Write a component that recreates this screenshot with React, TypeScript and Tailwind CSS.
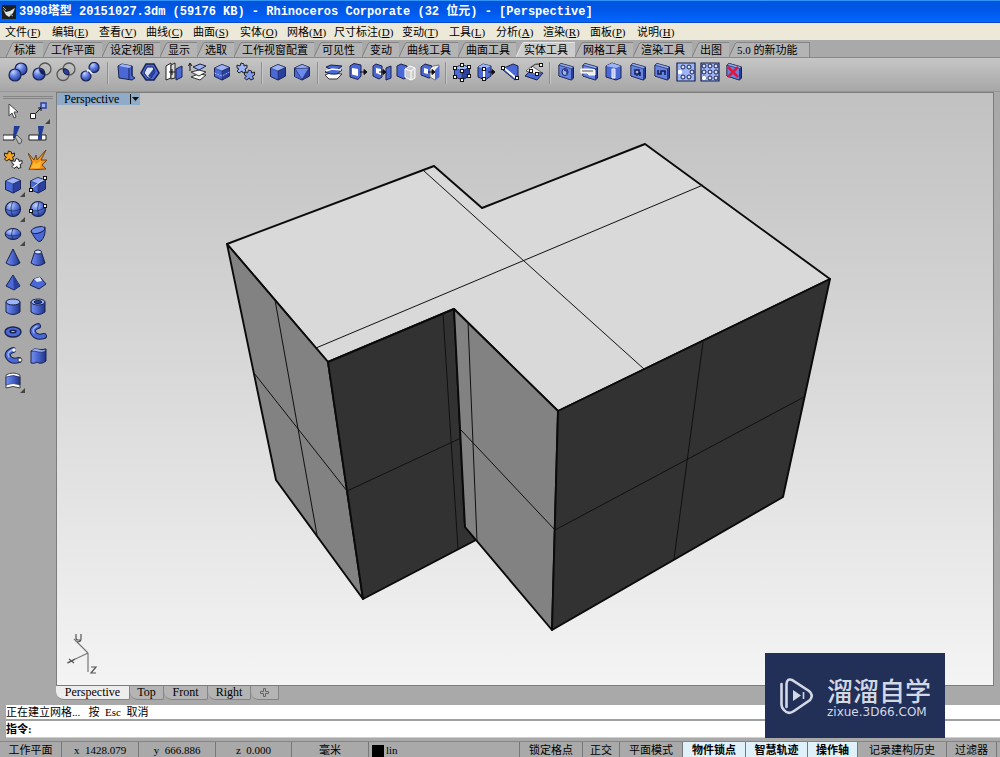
import React from "react";

const INK = "#18224f";
const MID = "#4b69d6";
const LIT = "#9db4f6";
const DEEP = "#2b409c";

type Pt = { x: number; y: number };

const Dot = ({ x, y }: Pt) => (
  <rect x={x - 1.5} y={y - 1.5} width="3" height="3" fill="#fff" stroke="#111" strokeWidth="1" />
);

const Ball = ({ x, y, r = 5 }: Pt & { r?: number }) => (
  <circle cx={x} cy={y} r={r} fill="url(#ball)" stroke={INK} strokeWidth="1.2" />
);

const Ring = ({ x, y }: Pt) => <circle cx={x} cy={y} r="6" fill="none" stroke="#555" strokeWidth="1.3" />;

const Cube = () => (
  <g stroke={INK} strokeWidth="1" strokeLinejoin="round">
    <path d="M2.5 6 10 2.5 17.5 5.5 17.5 14 10 18 2.5 14.5z" fill={MID} />
    <path d="M2.5 6 10 2.5 17.5 5.5 10 9z" fill={LIT} strokeWidth=".5" />
    <path d="M10 9 17.5 5.5V14L10 18z" fill={DEEP} strokeWidth=".5" />
  </g>
);

const Plate = () => (
  <g stroke={INK} strokeWidth="1" strokeLinejoin="round">
    <path d="M3 3 5 1.5 17.5 5V16L15.5 18 3 14z" fill={DEEP} />
    <path d="M3 3 15.5 6.5V18L3 14z" fill="#6683e4" strokeWidth=".6" />
    <path d="M3 3 5 1.5 17.5 5 15.5 6.5z" fill={LIT} strokeWidth=".4" />
  </g>
);

const Gear = ({ x, y, c }: Pt & { c: string }) => (
  <path
    transform={`translate(${x} ${y})`}
    d="M-5-3-2-2-1-5 2-4 2-2 5-3 5 0 3 1 4 4 1 5 0 3-3 5-5 3-3 1-5 0z"
    fill={c}
    stroke="#222"
    strokeWidth="1"
  />
);

const Arrow = ({ x, y }: Pt) => (
  <path d={`M${x - 6} ${y}H${x}M${x - 2} ${y - 2.5}L${x + 1} ${y}L${x - 2} ${y + 2.5}z`} stroke="#111" strokeWidth="1" fill="#111" />
);

const Banana = () => (
  <g strokeLinecap="round" fill="none">
    <path d="M10 4Q2 7 6 12 9 16 16 14" stroke={INK} strokeWidth="6" />
    <path d="M10 4Q2 7 6 12 9 16 16 14" stroke={MID} strokeWidth="4" />
    <path d="M9 4Q3 7 6 11" stroke={LIT} strokeWidth="1.5" />
  </g>
);

const drawings: Record<string, React.ReactNode> = {
  union: <><Ball x={13} y={7} r={6} /><Ball x={7} y={13} r={6} /></>,
  difference: <><Ring x={13} y={7} /><Ball x={7} y={12} r={6} /><path d="M7 7a6 6 0 0 0 6 6A6 6 0 0 0 7 7" fill="#111f55" /></>,
  intersect: <><Ring x={13} y={7} /><Ring x={7} y={12.5} /><path d="M7.5 7q6-.5 5.5 5.5-6 1-5.5-5.5" fill={DEEP} stroke={INK} /></>,
  split: <><Ball x={14} y={5.5} r={5} /><Ball x={6} y={14} r={5} /><path d="m9 8 3 4M7 9l2-1" stroke="#eef" strokeWidth="2" /></>,
  shell: <><path d="M2 4 6 2l10 2v10l3 2-3 2L3 16z" fill={MID} stroke={INK} /><path d="M6 2 16 4 13 6 3 4z" fill={LIT} /><path d="M13 6v11M16 4v10" stroke={INK} /></>,
  fillet: <><path d="m6 2 8 0 5 9-5 7H6l-5-7z" fill={MID} stroke={INK} strokeWidth="1.5" /><path d="m7 5 6 0 2 5-4 6H8l-4-5z" fill="#dce4f8" stroke={INK} /><path d="m8 14 6-8 1 5-4 5z" fill={DEEP} /></>,
  cap: <><path d="M2 4 7 1v15l-5 2z" fill="#fff" stroke="#222" /><path d="M7 3 11 1v15l-4 1z" fill="#ddd" stroke="#222" /><path d="m12 7 6-3v11l-6 3z" fill={MID} stroke={INK} /><path d="M5 10h6M8 7v6" stroke="#111" /></>,
  extract: <><path d="m3 15 7-3 8 1-6 5z" fill="#f8f8f8" stroke="#333" /><path d="m3 10 8-2 7 2-7 4z" fill="#f4f4f4" stroke="#333" /><path d="m5 5 7-3 6 2-7 4z" fill={LIT} stroke={INK} /><path d="M2 9V2M.5 4 2 1l2 3" stroke="#111" fill="none" /></>,
  merge: <><Cube /><path d="M2.5 11 10 14 17.5 10" stroke={LIT} fill="none" strokeDasharray="2 1" /></>,
  unjoin: <><Gear x={6} y={6} c={LIT} /><Gear x={13.5} y={13} c="#7f9af0" /></>,
  cube: <Cube />,
  cubeFold: <><Cube /><path d="m3 6.5 14-.5-7 11.500-7-3z" fill={MID} /><path d="m3 6.5 14-.5L10 17.5z" fill="#6d8aea" stroke={INK} strokeWidth=".6" /></>,
  wire: <><path d="M1 13 6 11l12 1-5 5H5z" fill="#fff" stroke="#333" /><path d="m2 5 5-2 11 1-5 4q-6 1-11-3z" fill={MID} stroke={INK} /><path d="m1 10 6-3 11 1-5 4q-7 1-12-2z" fill={MID} stroke={INK} /><path d="M2 9 8 7l9 1" stroke="#fff" fill="none" strokeWidth="1.5" /></>,
  extrude: <><path d="M2 4 6 1.5 13 3v11l-3 3.5L2 15z" fill={MID} stroke={INK} /><path d="m4 6 6 1v7l-6-1.5z" fill="#fff" /><Arrow x={18} y={10} /></>,
  moveFace: <><path d="m1 4 3-2 6 2v11l-3 2-6-3z" fill={MID} stroke={INK} /><path d="m4 6 5 1v6l-5-2z" fill="#fff" /><path d="m14 6 5-2v12l-5 2z" fill={MID} stroke={INK} /><Arrow x={13} y={10} /></>,
  copyFace: <><path d="m1 4 4-2 6 2v11l-3 2-7-3z" fill={MID} stroke={INK} /><path d="m9 7 5-3 5 2v10l-4 2-6-3zM9 7l6 2v9M15 9l4-3" fill="#ccc" stroke="#fff" /></>,
  pushFace: <><path d="m1 5 4-3 7 2v11l-3 1-8-3z" fill={MID} stroke={INK} /><path d="m10 7 3-3 6-1v12l-4 3-5-3z" fill="#eee" stroke="#777" /><path d="m15 8 4-4v11l-4 3z" fill={MID} /><path d="m4 6 4 1v5l-4-1z" fill="#fff" /><Arrow x={14} y={10} /></>,
  points: <><Cube />{[[3, 6], [10, 3], [17, 5], [10, 9], [3, 15], [10, 18], [17, 14]].map(([x, y]) => <Dot key={`${x}-${y}`} x={x} y={y} />)}</>,
  moveEdge: <><path d="M2 5 7 2l8 2v10l-6 4-7-3z" fill={MID} stroke={INK} /><path d="m2 5 5-3 8 2-6 3z" fill={LIT} /><path d="M8 7v9" stroke="#fff" strokeWidth="2" /><Dot x={8} y={7} /><Dot x={8} y={17} /><Arrow x={18} y={10} /></>,
  splitFace: <><path d="m4 6 9-4 5 2v12l-3 2L3 8z" fill={MID} stroke={INK} /><path d="m4 6 12 10" stroke="#fff" strokeWidth="2" /><Dot x={3} y={6} /><Dot x={17} y={16} /></>,
  foldFace: <><path d="m1 14 5-5 13 2-6 7z" fill={MID} stroke={INK} /><path d="m2 9 6-5 9 6-6 2z" fill="#eee" stroke="#666" /><path d="M7 6Q11 0 17 3" stroke="#222" fill="none" /><Dot x={17} y={3} /><Dot x={7} y={9} /><Dot x={13} y={12} /></>,
  hole: <><Plate /><ellipse cx="9" cy="10" rx="3" ry="3.5" fill={LIT} stroke={INK} /><path d="M8 8q4 0 3 4" fill="none" stroke={DEEP} strokeWidth="2" /></>,
  holeSlot: <><Plate /><path d="M1 7h8l6 1v5H9l-2-2H1z" fill="#eee" stroke="#fff" /><path d="M2 9h11" stroke="#555" /></>,
  holeRound: <><path d="m2 4 6-3 9 3v12l-5 2-10-3z" fill={MID} stroke={INK} /><path d="m2 4 6-3 9 3-5 2z" fill={LIT} /><path d="M8 7h3v9H8z" fill="#b9c8f8" stroke="#eef" /></>,
  holePlace: <><Plate /><path d="M7 8h4v4H7zM9 13v1M12 10v4" fill={LIT} stroke="#111b4d" strokeWidth="1.5" /></>,
  holeMove: <><Plate /><path d="M6 8v4h3V9h4v4" fill="none" stroke="#111b4d" strokeWidth="1.5" /></>,
  arrayPolar: <><path d="M1 1h18v18H1z" fill={LIT} stroke={INK} strokeWidth="1.2" />{[[7, 5], [13, 5], [16, 10], [13, 15], [7, 15]].map(([x, y]) => <circle key={`${x}-${y}`} cx={x} cy={y} r="2" fill="#dce3f6" stroke={INK} />)}<circle cx="4" cy="10" r="2.2" fill="#fff" /></>,
  arrayGrid: <><path d="M1 1h18v18H1z" fill={LIT} stroke={INK} strokeWidth="1.2" />{[4, 10, 16].flatMap((x) => [4, 10, 16].map((y) => <circle key={`${x}-${y}`} cx={x} cy={y} r="2" fill="#dce3f6" stroke={INK} />))}<circle cx="4" cy="16" r="2.2" fill="#fff" /></>,
  removeHole: <><Plate /><path d="m4 5 10 10M14 5 4 15" stroke="#e0193a" strokeWidth="2.5" /></>,

  pointer: <path d="M6 3v12l3-3 2 5 2-1-2-5h4z" fill="#fff" stroke="#444" strokeWidth="1" />,
  move: <><path d="M2.5 12.5h5v5h-5z" fill="#fff" stroke="#222" /><path d="M13 2h5v5h-5z" fill={LIT} stroke={DEEP} strokeWidth="1.5" /><path d="m8 12 5-5M10 7h3v3" stroke="#111" fill="none" /></>,
  trim: <><path d="M0 9h11v5H0z" fill="#fff" stroke="#222" /><path d="m12 11 2-2 5 5-1 3-2 1z" fill="#bbb" stroke="#555" /><path d="M11 0h6l-5 12h-2z" fill="#203b96" /></>,
  cut: <><path d="M1 9h17v5H1z" fill="#fff" stroke="#222" /><path d="M10 9h4v5h-4z" fill={DEEP} /><path d="M10 0h6l-3 12h-2z" fill="#203b96" /></>,
  join: <><Gear x={6.5} y={6} c="#f5a51f" /><Gear x={14} y={13.5} c="#fff" /></>,
  explode: <><path d="M0 3 6 10 8 5 9 10 18 0 13 10 19 10 14 15 18 19 1 20 4 12z" fill="#f7941c" stroke="#6e4514" strokeWidth="1" /><path d="m3 18 3-6 2 2 5-3-1 7z" fill="#ffbd2e" /></>,
  box3: <><Cube /><path d="m3 14 14-11" stroke="#ccd7ff" /><Dot x={3} y={15} /><Dot x={17} y={3} /></>,
  sphere: <><Ball x={10} y={10} r={7.5} /><path d="M2.5 10q7 4 15 0M10 2.5q-4 7 0 15" stroke={INK} strokeWidth=".7" fill="none" /></>,
  sphere3: <><Ball x={10} y={10} r={7.5} /><path d="M2.5 11q7 3 15-3M11 2.5q-3 7 0 15" stroke={INK} strokeWidth=".7" fill="none" /><Dot x={3} y={12} /><Dot x={17} y={7} /></>,
  ellipsoid: <><ellipse cx="10" cy="10" rx="7.8" ry="5.5" fill="url(#ball)" stroke={INK} /><path d="M2 10q8 4 16 0M10 4.5q-3 6 0 11" stroke={INK} strokeWidth=".7" fill="none" /></>,
  paraboloid: <><path d="M3 7Q9 20 13 17 18 12 17 3z" fill={MID} stroke={INK} /><ellipse cx="10" cy="6" rx="7" ry="3" transform="rotate(-15 10 6)" fill="#6e8bea" stroke={INK} /></>,
  cone: <path d="M10 1 17 15Q10 20 3 15z" fill="url(#side)" stroke={INK} />,
  truncCone: <><path d="M7 3 3 15q7 5 14 0L13 3z" fill="url(#side)" stroke={INK} /><ellipse cx="10" cy="4" rx="3.5" ry="2" fill="#d9e2ff" stroke={INK} /></>,
  pyramid: <><path d="m10 2 7 11-6 4-8-4z" fill={MID} stroke={INK} /><path d="m10 2 7 11-6 4z" fill={DEEP} /></>,
  truncPyramid: <><path d="m6 6 6-2 6 7-7 5-9-4z" fill={MID} stroke={INK} /><path d="m6 6 6-2 2 4-5 1z" fill="#dfe6ff" /></>,
  cylinder: <><path d="M3 5v10q7 5 14 0V5z" fill="url(#side)" stroke={INK} /><ellipse cx="10" cy="5" rx="7" ry="3" fill={LIT} stroke={INK} /></>,
  tube: <><path d="M3 5v10q7 5 14 0V5z" fill="url(#side)" stroke={INK} /><ellipse cx="10" cy="5" rx="7" ry="3" fill={LIT} stroke={INK} /><ellipse cx="10" cy="5" rx="4" ry="1.5" fill={DEEP} stroke={INK} /></>,
  torus: <><ellipse cx="10" cy="10" rx="8" ry="5" fill={MID} stroke={INK} strokeWidth="1.4" /><ellipse cx="10" cy="9.5" rx="3" ry="1.2" fill="#d4ddff" stroke={INK} strokeWidth="1.5" /></>,
  pipe: <Banana />,
  pipeRound: <><Banana /><circle cx="11" cy="4" r="1.8" fill="#fff" /><circle cx="17" cy="14" r="2" fill="#fff" stroke="#444" /></>,
  extrudeCurve: <><path d="M3 5v12q4 1 6-1 4 3 9-1V3z" fill="url(#side)" stroke={INK} /><path d="M3 5q4-4 7-2 4 2 8 0-1 4-7 3-4-1-8-1" fill={LIT} stroke={INK} strokeWidth=".6" /></>,
  extrudeSurface: <><path d="M3 4v13q7-3 14 0V4Q10 0 3 4" fill="#fff" stroke="#444" /><path d="M3 6q7-3 14 0v8q-7-3-14 0z" fill="url(#side)" stroke={INK} strokeWidth=".6" /></>,
};

const Icon = ({ name }: { name: string }) => (
  <svg viewBox="0 0 20 20" className="size-5 shrink-0" aria-hidden="true">
    {drawings[name]}
  </svg>
);

const menus = [
  ["文件", "F"], ["编辑", "E"], ["查看", "V"], ["曲线", "C"], ["曲面", "S"], ["实体", "O"], ["网格", "M"],
  ["尺寸标注", "D"], ["变动", "T"], ["工具", "L"], ["分析", "A"], ["渲染", "R"], ["面板", "P"], ["说明", "H"],
];

const tabs: [string, string][] = [
  ["标准", "w-[37px]"], ["工作平面", "w-[59px]"], ["设定视图", "w-[58px]"], ["显示", "w-[37px]"],
  ["选取", "w-[37px]"], ["工作视窗配置", "w-[80px]"], ["可见性", "w-[48px]"], ["变动", "w-[37px]"],
  ["曲线工具", "w-[59px]"], ["曲面工具", "w-[58px]"], ["实体工具", "w-[59px]"], ["网格工具", "w-[58px]"],
  ["渲染工具", "w-[59px]"], ["出图", "w-[37px]"], ["5.0 的新功能", "w-[80px]"],
];

const groups: { gap: string; icons: string[] }[] = [
  { gap: "w-3", icons: ["union", "difference", "intersect", "split"] },
  { gap: "w-2", icons: ["shell", "fillet", "cap", "extract", "merge", "unjoin"] },
  { gap: "w-2", icons: ["cube", "cubeFold"] },
  { gap: "w-2", icons: ["wire", "extrude", "moveFace", "copyFace", "pushFace"] },
  { gap: "w-2", icons: ["points", "moveEdge", "splitFace", "foldFace"] },
  { gap: "", icons: ["hole", "holeSlot", "holeRound", "holePlace", "holeMove", "arrayPolar", "arrayGrid", "removeHole"] },
];

const sideTools = [
  "pointer", "move", "trim", "cut", "join", "explode", "cube", "box3", "sphere", "sphere3", "ellipsoid", "paraboloid",
  "cone", "truncCone", "pyramid", "truncPyramid", "cylinder", "tube", "torus", "pipe", "pipeRound", "extrudeCurve", "extrudeSurface",
];
const withFlyout = ["move", "cube", "sphere", "ellipsoid", "extrudeSurface"];

const views: [string, string][] = [["Perspective", "w-[74px]"], ["Top", "w-[34px]"], ["Front", "w-[44px]"], ["Right", "w-[43px]"]];

const toggles: [string, string, boolean][] = [
  ["锁定格点", "w-[63px]", false], ["正交", "w-[37px]", false], ["平面模式", "w-[63px]", false],
  ["物件锁点", "w-[63px]", true], ["智慧轨迹", "w-[62px]", true], ["操作轴", "w-[50px]", true],
  ["记录建构历史", "w-[89px]", false], ["过滤器", "w-[50px]", false],
];

const Model = () => (
  <svg viewBox="57 93 936 592" className="size-full" role="img" aria-label="Perspective">
    <g stroke="#0a0a0a" strokeWidth="1.9" strokeLinejoin="round">
      <path d="M227 244 434 166 482 208 645 144 830 279 558 411 454 309 328 362z" fill="#d9d9d9" />
      <path d="M227 244 328 362 363 599 276 480z" fill="#828282" />
      <path d="M328 362 454 309 465 527 476 540 363 599z" fill="#323232" />
      <path d="M454 309 558 411 552 630 465 527z" fill="#828282" />
      <path d="M558 411 830 279 783 497 552 630z" fill="#323232" />
    </g>
    <path
      d="M424 171 644 369M316 348 703 185M275 300 317 535M254 373 347 491M347 491 461 438M443 314 458 549M468 322 477 541M461 430 555 530M703 342 674 559M555 530 804 397"
      stroke="#111"
      strokeWidth="1"
      fill="none"
    />
    <g stroke="#777" fill="none" strokeWidth="1.2">
      <path d="M88 653 74 639M88 653 67 663M88 653V672" />
      <path d="M76 634v4q0 2 2 2h2M81 634v5q0 3-4 3M69 659l5 4M75 659l-7 4M91 667h5l-5 6h5" stroke="#555" />
    </g>
  </svg>
);

const Watermark = () => (
  <aside className="absolute right-[55px] bottom-[19px] flex h-[85px] w-[180px] items-center gap-3 bg-[#222f56] pl-[14px] text-[#d3d8e5]">
    <svg viewBox="0 0 36 38" className="h-[38px] w-9 shrink-0" fill="none" stroke="currentColor" strokeWidth="2.6" strokeLinecap="round" aria-hidden="true">
      <path d="M7.5 30V7Q8 1 13 3L30 14Q35 18 31 23L15 34Q9 38 5 33 2 30 2.5 26V7" />
      <path d="m14 13 8 5.5-8 5.500z" fill="currentColor" stroke="none" />
      <path d="M24.5 15v7" strokeWidth="1.6" strokeLinecap="butt" />
    </svg>
    <div className="flex flex-col whitespace-nowrap">
      <strong className="font-['Noto_Sans_CJK_SC',sans-serif] text-[26px] leading-[32px] font-medium">溜溜自学</strong>
      <span className="font-['DejaVu_Sans',sans-serif] text-[12px] leading-[12px]">zixue.3D66.COM</span>
    </div>
  </aside>
);

export default function App() {
  return (
    <div className="relative flex h-screen flex-col overflow-hidden bg-[#a9a9a9] font-['Liberation_Serif','Noto_Sans_CJK_SC',serif] text-[11px] leading-[14px] whitespace-nowrap text-black">
      <svg className="absolute size-0" aria-hidden="true">
        <defs>
          <radialGradient id="ball" cx=".35" cy=".25" r=".8">
            <stop offset="0" stopColor="#c3d2ff" />
            <stop offset=".5" stopColor="#5877dd" />
            <stop offset="1" stopColor="#263c98" />
          </radialGradient>
          <linearGradient id="side">
            <stop offset="0" stopColor="#7892e8" />
            <stop offset=".35" stopColor="#5471dc" />
            <stop offset="1" stopColor="#203386" />
          </linearGradient>
        </defs>
      </svg>

      <header className="flex h-[23px] shrink-0 items-center gap-[3px] border-t border-b border-t-[#3093f8] border-b-[#0a48c4] bg-linear-to-b from-[#0054dc] via-[#0058ea] to-[#0468ff] pl-[2px] text-white">
        <svg viewBox="0 0 14 14" className="size-[14px]" aria-hidden="true">
          <path d="M0 0h14v14H0z" fill="#1d2020" />
          <path d="M1 4 4 7 8 6 13 3 11 8 7 12 4 10z" fill="#e3e5e0" />
          <path d="m1 2 3 3M8 9l3 2" stroke="#a9ada5" />
        </svg>
        <h1 className="font-['Liberation_Mono','Noto_Sans_CJK_SC',monospace] text-[12px] font-bold">
          3998塔型 20151027.3dm (59176 KB) - Rhinoceros Corporate (32 位元) - [Perspective]
        </h1>
      </header>

      <nav className="flex h-[17px] shrink-0 items-center bg-[#ece9d8] pl-[5px]">
        {menus.map(([label, key]) => (
          <button key={label} className={`shrink-0 text-left ${label.length > 2 ? "w-[68px]" : "w-[47px]"}`}>
            {label}(<u>{key}</u>)
          </button>
        ))}
      </nav>

      <div role="tablist" className="flex h-[18px] shrink-0 items-end border-b border-[#888] pl-[6px]">
        {tabs.map(([label, width]) => {
          const active = label === "实体工具";
          return (
            <button key={label} role="tab" aria-selected={active} className={`flex h-[15px] shrink-0 ${width}`}>
              <svg viewBox="0 0 8 15" className="h-[15px] w-2 shrink-0" aria-hidden="true">
                <path d="M0 15 6 2Q7 .5 8 .5V15z" fill={active ? "#cccccc" : "#b4b4b4"} />
                <path d="M0 15 6 2Q7 .5 8 .5" fill="none" stroke={active ? "#e6e6e6" : "#818181"} />
              </svg>
              <span className={`h-full grow border-t text-left ${active ? "border-[#e6e6e6] bg-[#cccccc]" : "border-[#858585] bg-[#b4b4b4]"}`}>
                {label}
              </span>
            </button>
          );
        })}
        <span className="h-[15px] border-r border-[#858585]" />
      </div>

      <div role="toolbar" className="flex h-[34px] shrink-0 items-start border-b border-[#969696] bg-linear-to-b from-[#c6c6c6] to-[#a7a7a7] pt-1 pl-[6px]">
        {groups.map((group, i) => (
          <div key={i} className="flex shrink-0">
            {group.icons.map((name) => (
              <button key={name} aria-label={name} className="flex size-6 shrink-0 justify-center">
                <Icon name={name} />
              </button>
            ))}
            {group.gap && (
              <span className={`flex justify-center ${group.gap}`}>
                <span className="h-[22px] w-[2px] border-r border-l border-r-[#c8c8c8] border-l-[#8e8e8e]" />
              </span>
            )}
          </div>
        ))}
      </div>

      <div className="flex min-h-0 grow">
        <aside className="w-[56px] shrink-0 pt-1">
          <div className="mx-[3px] h-[3px] border-t border-b border-[#858585]" />
          <div className="grid h-[294px] w-[50px] grid-cols-2 grid-rows-12">
            {sideTools.map((name) => (
              <button key={name} aria-label={name} className="relative flex items-center justify-center">
                <Icon name={name} />
                {withFlyout.includes(name) && (
                  <svg viewBox="0 0 5 5" className="absolute right-0 bottom-0 size-[5px]" aria-hidden="true">
                    <path d="M5 0v5H0z" fill="#444" />
                  </svg>
                )}
              </button>
            ))}
          </div>
        </aside>

        <main className="mr-[6px] flex min-w-0 grow flex-col">
          <section className="relative min-h-0 grow border border-[#7d7d7d] bg-linear-to-b from-[#c1c1c1] to-[#f4f4f4]">
            <Model />
            <button className="absolute top-0 left-0 flex h-3 w-[83px] items-center bg-[#8fabc8] pl-[7px] text-[12px] leading-3">
              <span className="w-[66px] text-left">Perspective</span>
              <svg viewBox="0 0 9 10" className="h-[10px] w-[9px]" aria-hidden="true">
                <path d="M.5 0v10" stroke="#111" />
                <path d="M2 3h7L5.5 7z" fill="#111" />
              </svg>
            </button>
          </section>
          <div role="tablist" className="flex h-[19px] shrink-0 items-start text-[12px]">
            {views.map(([label, width], i) => (
              <button
                key={label}
                role="tab"
                aria-selected={i === 0}
                className={`h-[14px] shrink-0 rounded-bl-lg rounded-br-xs border-r border-b border-[#858585] leading-[13px] ${width} ${i === 0 ? "bg-[#ededed]" : "bg-[#b4b4b4]"}`}
              >
                {label}
              </button>
            ))}
            <button aria-label="add" className="flex h-[14px] w-7 items-center justify-center rounded-bl-lg border-r border-b border-[#858585] bg-[#b4b4b4]">
              <svg viewBox="0 0 9 9" className="size-[9px]" aria-hidden="true">
                <path d="M3.5 .5h2v3h3v2h-3v3h-2v-3h-3v-2h3z" fill="none" stroke="#666" />
              </svg>
            </button>
          </div>
        </main>
      </div>

      <section className="shrink-0 pb-[3px] pl-[6px]">
        <output className="block h-[14px] w-full bg-white">正在建立网格...&nbsp;&nbsp; 按&nbsp; Esc&nbsp; 取消</output>
        <div className="flex h-[19px] items-center border-t-2 border-b border-t-[#a0a0a0] border-b-[#d0d0d0] bg-white">
          <label htmlFor="command" className="font-bold">指令:</label>
          <input id="command" className="min-w-0 grow bg-transparent px-1 outline-none" />
        </div>
      </section>

      <footer className="flex h-4 shrink-0 overflow-hidden border-t border-[#858585] text-center leading-[17px] *:shrink-0 *:border-r *:border-[#777]">
        <button className="w-[62px]">工作平面</button>
        <span className="w-[77px]">x&nbsp; 1428.079</span>
        <span className="w-[77px]">y&nbsp; 666.886</span>
        <span className="w-[76px]">z&nbsp; 0.000</span>
        <button className="w-[77px]">毫米</button>
        <button className="flex w-[151px] grow items-start gap-[2px] pl-[3px]">
          <span className="mt-[3px] h-3 w-3 bg-black" />
          lin
        </button>
        {toggles.map(([label, width, on]) => (
          <button key={label} aria-pressed={on} className={`${width} ${on ? "bg-[#e0f1fa] font-bold" : ""}`}>
            {label}
          </button>
        ))}
        <span className="w-1" />
      </footer>

      <Watermark />
    </div>
  );
}
